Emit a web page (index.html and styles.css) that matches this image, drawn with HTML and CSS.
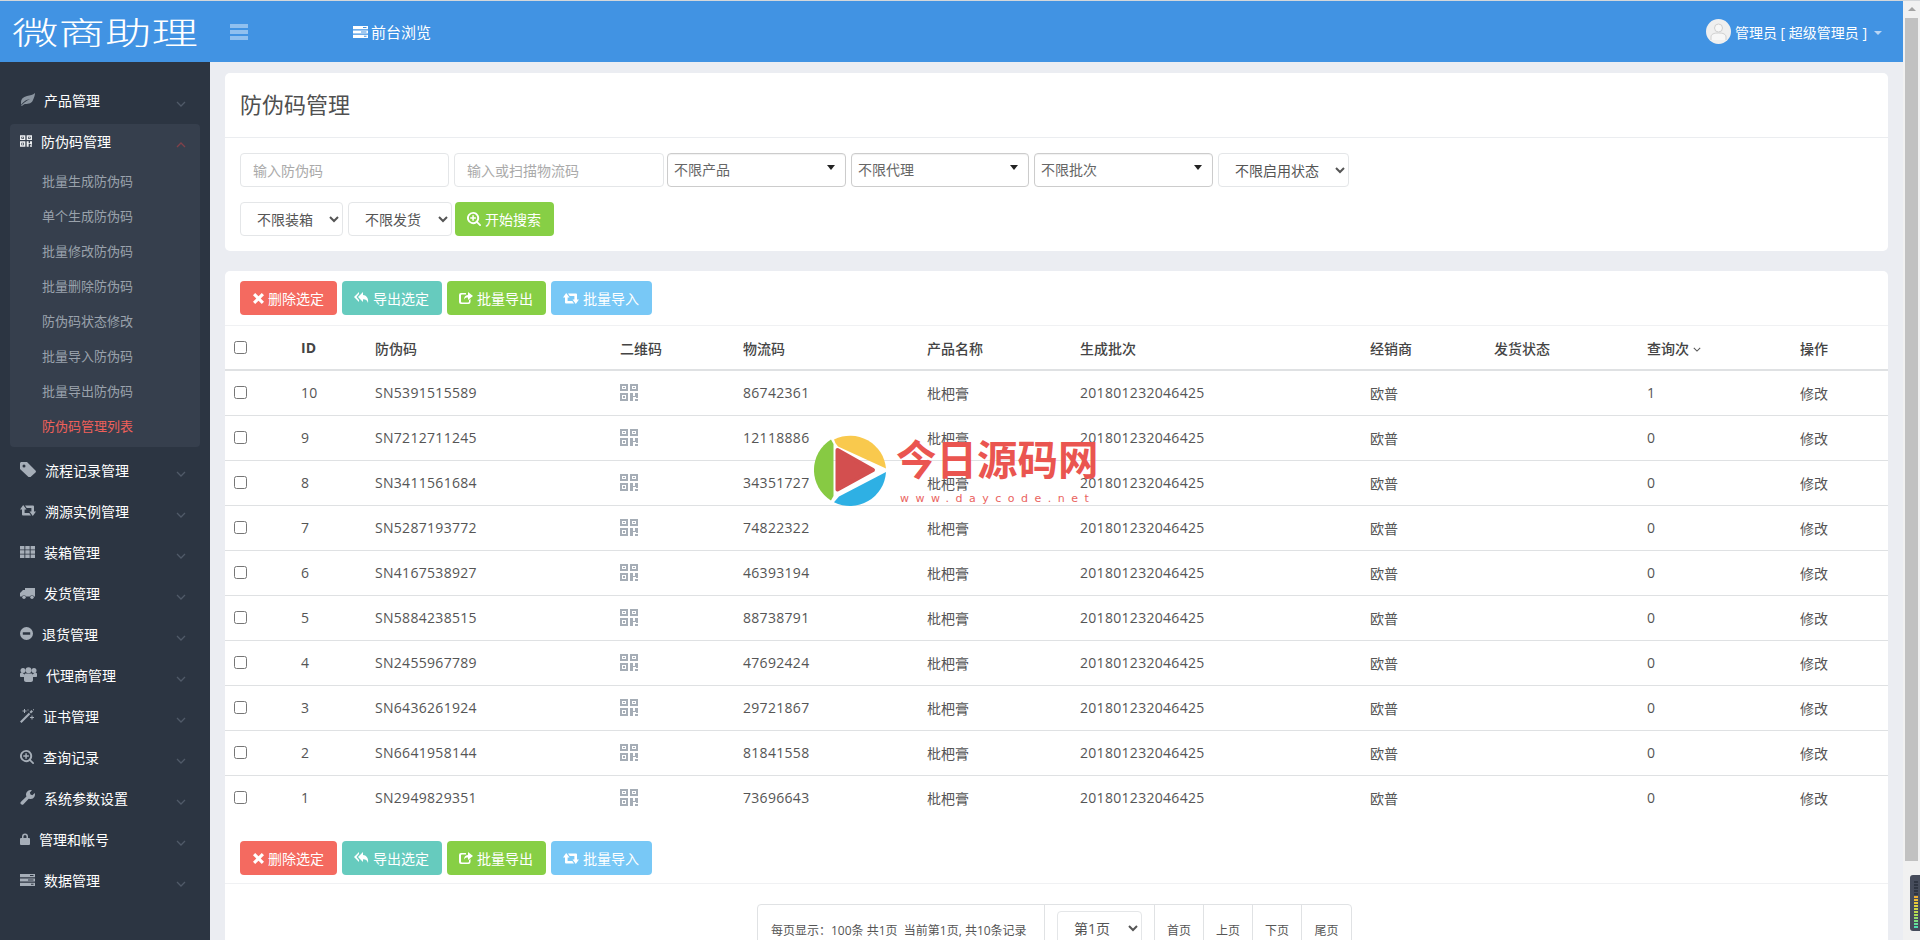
FILE: index.html
```html
<!DOCTYPE html>
<html lang="zh-CN">
<head>
<meta charset="utf-8">
<title>防伪码管理</title>
<link rel="stylesheet" href="styles.css">
</head>
<body>
<svg class="defs" width="0" height="0" aria-hidden="true">
  <symbol id="i-qr" viewBox="0 0 18 17"><path fill-rule="evenodd" d="M0 0h8v7H0zM2 2v3h4V2zM3 3h2v1H3zM10 0h8v7h-8zM12 2v3h4V2zM13 3h2v1h-2zM0 9h8v8H0zM2 11v4h4v-4zM3 12h2v2H3zM10 9h3v3h2V9h3v5h-2v-1h-3v4h-3zM15 15h3v2h-3z"/></symbol>
  <symbol id="i-x" viewBox="0 0 10 10"><path d="M2 0l3 3 3-3 2 2-3 3 3 3-2 2-3-3-3 3-2-2 3-3-3-3z"/></symbol>
  <symbol id="i-reply" viewBox="0 0 15 12"><path d="M5 0L0 5l5 5V8L2.500 5 5 2zM9 0L4 5l5 5V7.200c3 0 4 1 5 3.800 1-5-2-8-5-8z"/></symbol>
  <symbol id="i-share" viewBox="0 0 14 12"><path d="M2 1h5v1.500H3a1 1 0 00-1 1v6a1 1 0 001 1h6a1 1 0 001-1V8l1.500-1v3a2 2 0 01-2 2H2a2 2 0 01-2-2V3a2 2 0 012-2zM9 0l5 4-5 4V5.500C7 5.500 5.500 6 5 8c0-3 1-4.500 4-5z"/></symbol>
  <symbol id="i-retweet" viewBox="0 0 16 11"><path d="M3.200 0L6.500 4.500H4.600V8H9.300L11 10.500H3a1 1 0 01-1-1V4.500H0zM12.800 11L9.500 6.500h1.900V3H6.700L5 .5h8a1 1 0 011 1v5h2z"/></symbol>
  <symbol id="i-search" viewBox="0 0 15 15"><path fill-rule="evenodd" d="M6.500 0a6.500 6.500 0 015.200 10.400l3 3c.4.400.4 1 0 1.300-.4.400-1 .4-1.300 0l-3-3A6.500 6.500 0 116.500 0zm0 2a4.500 4.500 0 100 9 4.500 4.500 0 000-9zM5.700 3.500h1.600v2.200h2.200v1.600H7.300v2.200H5.700V7.300H3.500V5.700h2.200z"/></symbol>
  <symbol id="i-server" viewBox="0 0 15 12"><path fill-rule="evenodd" d="M0 0h15v3.300H0zM10 1v1h3.500V1zM0 4.400h15v3.200H0zM8 5.500v1h5.500v-1zM0 8.700h15V12H0zM11 9.800v1h2.500v-1z"/></symbol>
  <symbol id="i-down" viewBox="0 0 10 6"><path d="M1 1l4 4 4-4" fill="none" stroke="currentColor" stroke-width="1.300"/></symbol>
  <symbol id="i-up" viewBox="0 0 10 6"><path d="M1 5l4-4 4 4" fill="none" stroke="currentColor" stroke-width="1.300"/></symbol>
</svg>

<div class="app">
  <div class="main">
    <header class="topbar">
      <div class="logo"><span class="logo-text">微商助理</span></div>
      <div class="hamburger"><span></span><span></span><span></span></div>
      <a class="front-link"><svg class="front-icon" width="15" height="12"><use href="#i-server"/></svg>前台浏览</a>
      <div class="user">
        <svg class="avatar" width="25" height="25" viewBox="0 0 25 25"><circle cx="12.500" cy="12.500" r="12.500" fill="#efefef"/><circle cx="12.500" cy="9" r="4" fill="#f7f7f7" stroke="#cfcfcf"/><path d="M5 21v-3c0-3 3-4 7.500-4s7.500 1 7.500 4v3" fill="#f7f7f7" stroke="#cfcfcf"/></svg>
        <span>管理员 [ 超级管理员 ]</span>
        <i class="user-caret"></i>
      </div>
    </header>

    <div class="body-row">
      <nav class="sidebar">
        <a class="nav-item">
          <svg class="nav-icon dim" width="15" height="13" viewBox="0 0 15 13"><path d="M15 0C13 2 10 2 7 3 3 4 1 6 1 9c0 1 0 2 .5 3C2 10 5 7 10 6 6 8 3 10 1 13h1c1-1 2-2 3-2 4 0 7-1 8-4 1-2 2-5 2-7z"/></svg>
          <span>产品管理</span><svg class="chev" width="10" height="6"><use href="#i-down"/></svg>
        </a>
        <div class="nav-group">
          <a class="nav-item in-group">
            <svg class="nav-icon bright" width="12" height="12"><use href="#i-qr"/></svg>
            <span>防伪码管理</span><svg class="chev chev-open" width="10" height="6"><use href="#i-up"/></svg>
          </a>
          <ul class="sub-list">
            <li>批量生成防伪码</li>
            <li>单个生成防伪码</li>
            <li>批量修改防伪码</li>
            <li>批量删除防伪码</li>
            <li>防伪码状态修改</li>
            <li>批量导入防伪码</li>
            <li>批量导出防伪码</li>
            <li class="current">防伪码管理列表</li>
          </ul>
        </div>
        <a class="nav-item">
          <svg class="nav-icon" width="16" height="15" viewBox="0 0 16 15"><path fill-rule="evenodd" d="M0 1.500C0 .7.7 0 1.500 0H7l8.500 8.500c.6.600.6 1.400 0 2L10.500 15c-.6.600-1.400.6-2 0L0 7zM4 2.500a1.500 1.500 0 100 3 1.500 1.500 0 000-3z"/></svg>
          <span>流程记录管理</span><svg class="chev" width="10" height="6"><use href="#i-down"/></svg>
        </a>
        <a class="nav-item">
          <svg class="nav-icon" width="16" height="11"><use href="#i-retweet"/></svg>
          <span>溯源实例管理</span><svg class="chev" width="10" height="6"><use href="#i-down"/></svg>
        </a>
        <a class="nav-item">
          <svg class="nav-icon" width="15" height="12" viewBox="0 0 15 12"><path d="M0 0h4.400v3.400H0zM5.300 0h4.400v3.400H5.300zM10.600 0H15v3.400h-4.400zM0 4.300h4.400v3.400H0zM5.300 4.300h4.400v3.400H5.300zM10.600 4.300H15v3.400h-4.400zM0 8.600h4.400V12H0zM5.300 8.600h4.400V12H5.300zM10.600 8.600H15V12h-4.400z"/></svg>
          <span>装箱管理</span><svg class="chev" width="10" height="6"><use href="#i-down"/></svg>
        </a>
        <a class="nav-item">
          <svg class="nav-icon" width="15" height="12" viewBox="0 0 15 12"><path d="M5 1h10v8.500h-1a2.300 2.300 0 00-4 0H6a2.300 2.300 0 00-4 0H0V6l3-3h2z"/><circle cx="4" cy="10.200" r="1.700"/><circle cx="12" cy="10.200" r="1.700"/></svg>
          <span>发货管理</span><svg class="chev" width="10" height="6"><use href="#i-down"/></svg>
        </a>
        <a class="nav-item">
          <svg class="nav-icon" width="13" height="13" viewBox="0 0 13 13"><path fill-rule="evenodd" d="M6.500 0a6.500 6.500 0 110 13 6.500 6.500 0 010-13zM2.800 5.300v2.400h7.400V5.300z"/></svg>
          <span>退货管理</span><svg class="chev" width="10" height="6"><use href="#i-down"/></svg>
        </a>
        <a class="nav-item">
          <svg class="nav-icon" width="17" height="15" viewBox="0 0 17 15"><circle cx="3" cy="3.500" r="2.500"/><circle cx="14" cy="3.500" r="2.500"/><circle cx="8.500" cy="3.200" r="3"/><path d="M0 7c0-1 1-1.500 2-1.500L4 7v3H1c-.6 0-1-.4-1-1zM17 7c0-1-1-1.500-2-1.500L13 7v3h3c.6 0 1-.4 1-1zM4 8.500C4 7 5 6.500 6 6.500h5c1 0 2 .5 2 2V13c0 1-1 2-2 2H6c-1 0-2-1-2-2z"/></svg>
          <span>代理商管理</span><svg class="chev" width="10" height="6"><use href="#i-down"/></svg>
        </a>
        <a class="nav-item">
          <svg class="nav-icon" width="14" height="14" viewBox="0 0 14 14"><path d="M1.500 14L0 12.500 8.800 3.700l1.500 1.500zM9.500 3L11.500 1 13 2.500 11 4.500z"/><path d="M4 0h1v1.500h1.500v1H5V4H4V2.500H2.500v-1H4zM11.500 6.500h1V8H14v1h-1.500v1.500h-1V9H10V8h1.500zM7.500 .5h1v1h-1zM13 .2h1v1h-1z"/></svg>
          <span>证书管理</span><svg class="chev" width="10" height="6"><use href="#i-down"/></svg>
        </a>
        <a class="nav-item">
          <svg class="nav-icon" width="14" height="14"><use href="#i-search"/></svg>
          <span>查询记录</span><svg class="chev" width="10" height="6"><use href="#i-down"/></svg>
        </a>
        <a class="nav-item">
          <svg class="nav-icon" width="15" height="15" viewBox="0 0 15 15"><path d="M14.700 3A4.500 4.500 0 1112 .3L9.800 2.600l.7 1.900 1.900.7zM6.700 6.200l2.200 2.200-5.400 5.800c-.7.700-1.700.8-2.500.1-.8-.8-.7-1.900 0-2.600z"/></svg>
          <span>系统参数设置</span><svg class="chev" width="10" height="6"><use href="#i-down"/></svg>
        </a>
        <a class="nav-item">
          <svg class="nav-icon" width="10" height="12" viewBox="0 0 10 12"><path fill-rule="evenodd" d="M2 5V3.500a3 3 0 016 0V5h1a1 1 0 011 1v5a1 1 0 01-1 1H1a1 1 0 01-1-1V6a1 1 0 011-1zM3.500 5h3V3.500a1.500 1.500 0 00-3 0z"/></svg>
          <span>管理和帐号</span><svg class="chev" width="10" height="6"><use href="#i-down"/></svg>
        </a>
        <a class="nav-item">
          <svg class="nav-icon" width="15" height="12"><use href="#i-server"/></svg>
          <span>数据管理</span><svg class="chev" width="10" height="6"><use href="#i-down"/></svg>
        </a>
      </nav>

      <main class="content">
        <section class="card card-search">
          <h1 class="card-title">防伪码管理</h1>
          <form class="filters">
            <div class="filter-row">
              <input class="field w-209 mr-5" placeholder="输入防伪码">
              <input class="field w-210 mr-3" placeholder="输入或扫描物流码">
              <div class="chosen w-179 mr-5">不限产品<i class="chosen-caret"></i></div>
              <div class="chosen w-178 mr-5">不限代理<i class="chosen-caret"></i></div>
              <div class="chosen w-179 mr-5">不限批次<i class="chosen-caret"></i></div>
              <select class="pick w-131"><option>不限启用状态</option></select>
            </div>
            <div class="filter-row">
              <select class="pick w-103 mr-5"><option>不限装箱</option></select>
              <select class="pick w-104 mr-3"><option>不限发货</option></select>
              <button class="btn btn-green btn-search" type="button"><svg width="14" height="14"><use href="#i-search"/></svg>开始搜索</button>
            </div>
          </form>
        </section>

        <section class="card card-list">
          <div class="actions">
            <button class="btn btn-red" type="button"><svg width="11" height="11"><use href="#i-x"/></svg>删除选定</button>
            <button class="btn btn-teal" type="button"><svg width="15" height="12"><use href="#i-reply"/></svg>导出选定</button>
            <button class="btn btn-green" type="button"><svg width="14" height="12"><use href="#i-share"/></svg>批量导出</button>
            <button class="btn btn-blue" type="button"><svg width="16" height="11"><use href="#i-retweet"/></svg>批量导入</button>
          </div>
          <table class="grid">
            <colgroup>
              <col class="c1"><col class="c2"><col class="c3"><col class="c4"><col class="c5"><col class="c6"><col class="c7"><col class="c8"><col class="c9"><col class="c10"><col class="c11">
            </colgroup>
            <thead>
              <tr><th><input type="checkbox"></th><th class="th-id">ID</th><th>防伪码</th><th>二维码</th><th>物流码</th><th>产品名称</th><th>生成批次</th><th>经销商</th><th>发货状态</th><th>查询次 <svg class="th-chev" width="8" height="5"><use href="#i-down"/></svg></th><th>操作</th></tr>
            </thead>
            <tbody>
              <tr><td><input type="checkbox"></td><td class="n">10</td><td class="n">SN5391515589</td><td><svg class="qr" width="18" height="17"><use href="#i-qr"/></svg></td><td class="n">86742361</td><td>枇杷膏</td><td class="n">201801232046425</td><td>欧普</td><td></td><td class="n">1</td><td>修改</td></tr>
              <tr><td><input type="checkbox"></td><td class="n">9</td><td class="n">SN7212711245</td><td><svg class="qr" width="18" height="17"><use href="#i-qr"/></svg></td><td class="n">12118886</td><td>枇杷膏</td><td class="n">201801232046425</td><td>欧普</td><td></td><td class="n">0</td><td>修改</td></tr>
              <tr><td><input type="checkbox"></td><td class="n">8</td><td class="n">SN3411561684</td><td><svg class="qr" width="18" height="17"><use href="#i-qr"/></svg></td><td class="n">34351727</td><td>枇杷膏</td><td class="n">201801232046425</td><td>欧普</td><td></td><td class="n">0</td><td>修改</td></tr>
              <tr><td><input type="checkbox"></td><td class="n">7</td><td class="n">SN5287193772</td><td><svg class="qr" width="18" height="17"><use href="#i-qr"/></svg></td><td class="n">74822322</td><td>枇杷膏</td><td class="n">201801232046425</td><td>欧普</td><td></td><td class="n">0</td><td>修改</td></tr>
              <tr><td><input type="checkbox"></td><td class="n">6</td><td class="n">SN4167538927</td><td><svg class="qr" width="18" height="17"><use href="#i-qr"/></svg></td><td class="n">46393194</td><td>枇杷膏</td><td class="n">201801232046425</td><td>欧普</td><td></td><td class="n">0</td><td>修改</td></tr>
              <tr><td><input type="checkbox"></td><td class="n">5</td><td class="n">SN5884238515</td><td><svg class="qr" width="18" height="17"><use href="#i-qr"/></svg></td><td class="n">88738791</td><td>枇杷膏</td><td class="n">201801232046425</td><td>欧普</td><td></td><td class="n">0</td><td>修改</td></tr>
              <tr><td><input type="checkbox"></td><td class="n">4</td><td class="n">SN2455967789</td><td><svg class="qr" width="18" height="17"><use href="#i-qr"/></svg></td><td class="n">47692424</td><td>枇杷膏</td><td class="n">201801232046425</td><td>欧普</td><td></td><td class="n">0</td><td>修改</td></tr>
              <tr><td><input type="checkbox"></td><td class="n">3</td><td class="n">SN6436261924</td><td><svg class="qr" width="18" height="17"><use href="#i-qr"/></svg></td><td class="n">29721867</td><td>枇杷膏</td><td class="n">201801232046425</td><td>欧普</td><td></td><td class="n">0</td><td>修改</td></tr>
              <tr><td><input type="checkbox"></td><td class="n">2</td><td class="n">SN6641958144</td><td><svg class="qr" width="18" height="17"><use href="#i-qr"/></svg></td><td class="n">81841558</td><td>枇杷膏</td><td class="n">201801232046425</td><td>欧普</td><td></td><td class="n">0</td><td>修改</td></tr>
              <tr><td><input type="checkbox"></td><td class="n">1</td><td class="n">SN2949829351</td><td><svg class="qr" width="18" height="17"><use href="#i-qr"/></svg></td><td class="n">73696643</td><td>枇杷膏</td><td class="n">201801232046425</td><td>欧普</td><td></td><td class="n">0</td><td>修改</td></tr>
            </tbody>
          </table>
          <div class="actions actions-bottom">
            <button class="btn btn-red" type="button"><svg width="11" height="11"><use href="#i-x"/></svg>删除选定</button>
            <button class="btn btn-teal" type="button"><svg width="15" height="12"><use href="#i-reply"/></svg>导出选定</button>
            <button class="btn btn-green" type="button"><svg width="14" height="12"><use href="#i-share"/></svg>批量导出</button>
            <button class="btn btn-blue" type="button"><svg width="16" height="11"><use href="#i-retweet"/></svg>批量导入</button>
          </div>
          <div class="pager-wrap">
            <div class="pager">
              <span class="pager-info">每页显示：100条 共1页&nbsp; 当前第1页, 共10条记录</span>
              <span class="pager-select"><select class="pick w-85"><option>第1页</option></select></span>
              <a class="pager-link">首页</a><a class="pager-link">上页</a><a class="pager-link">下页</a><a class="pager-link">尾页</a>
            </div>
          </div>
        </section>
      </main>
    </div>
  </div>

  <div class="scrollbar">
    <i class="scroll-up"></i>
    <div class="scroll-thumb"></div>
  </div>
</div>

<div class="meter"><i class="meter-bars"></i></div>

<div class="watermark">
  <svg class="wm-logo" width="72" height="72" viewBox="0 0 72 72">
    <path fill="#f9c94d" d="M20 5.500A36 36 0 0 1 72 34.500L24 12.500Q21 9.500 20 5.500z"/>
    <path fill="#87ca43" d="M17 5.400A36 36 0 0 0 17 66.600L19.500 62V10z"/>
    <path fill="#2eb0e4" d="M72 38A36 36 0 0 1 20 68.200L25 62.500z"/>
    <path fill="#d34f4f" stroke="#d34f4f" stroke-width="4" stroke-linejoin="round" d="M23.500 16L59 36 23.500 55.500z"/>
  </svg>
  <div class="wm-text">
    <div class="wm-title">今日源码网</div>
    <div class="wm-url">www.daycode.net</div>
  </div>
</div>
</body>
</html>
```
FILE: styles.css
```css
* { box-sizing: border-box; }
html, body { margin: 0; padding: 0; height: 940px; overflow: hidden; }
body {
  position: relative;
  font-family: "Open Sans", "Noto Sans CJK SC", sans-serif;
  font-size: 14px;
  color: #555;
  background: #ebedf2;
  border-top: 1px solid #d4d7da;
}
.defs { position: absolute; }
a { color: inherit; text-decoration: none; }

.app { display: flex; height: 939px; }
.main { width: 1903px; display: flex; flex-direction: column; }

/* top bar */
.topbar {
  height: 61px;
  flex: none;
  display: flex;
  align-items: center;
  background: #4193e3;
  color: #fff;
  padding-right: 21px;
}
.logo { width: 230px; padding-left: 12px; flex: none; }
.logo-text {
  display: inline-block;
  font-size: 31px;
  line-height: 40px;
  font-weight: 300;
  white-space: nowrap;
  transform: scaleX(1.5);
  transform-origin: left center;
  letter-spacing: 0;
}
.hamburger { width: 18px; display: flex; flex-direction: column; gap: 2px; flex: none; }
.hamburger span { height: 4px; background: rgba(255,255,255,.42); }
.front-link { display: flex; align-items: center; gap: 3px; margin-left: 105px; font-size: 15px; }
.front-icon { fill: #fff; }
.user { margin-left: auto; display: flex; align-items: center; font-size: 14px; }
.avatar { margin-right: 4px; }
.user-caret {
  margin: 2px 0 0 7px;
  border-top: 4px solid #b9d6f5;
  border-left: 4px solid transparent;
  border-right: 4px solid transparent;
}

.body-row { flex: 1; display: flex; min-height: 0; }

/* sidebar */
.sidebar {
  width: 210px;
  flex: none;
  background: #2c3542;
  padding-top: 17px;
  color: #fff;
}
.nav-item {
  height: 41px;
  display: flex;
  align-items: center;
  gap: 9px;
  padding: 0 24px 0 20px;
  font-size: 14px;
}
.nav-icon { fill: #a6aeb8; flex: none; }
.nav-icon.dim { fill: #8b95a0; }
.nav-icon.bright { fill: #eef0f2; }
.chev { margin: 8px 0 0 auto; color: #505a68; flex: none; }
.chev-open { color: #80414a; }
.nav-group {
  margin: 4px 10px 2px;
  padding-bottom: 3px;
  background: #363f4d;
  border-radius: 4px;
}
.nav-item.in-group { height: 34px; padding: 0 14px 0 10px; }
.sub-list { list-style: none; margin: 6px 0 0; padding: 0 0 0 32px; color: #9aa2ac; font-size: 13px; }
.sub-list li { height: 35px; line-height: 35px; }
.sub-list .current { color: #f0605a; }

/* content */
.content { flex: 1; min-width: 0; padding: 11px 15px 0; display: flex; flex-direction: column; gap: 20px; overflow: hidden; }
.card { background: #fff; border-radius: 5px; flex: none; }
.card-title {
  margin: 0;
  height: 65px;
  line-height: 62px;
  padding-left: 15px;
  font-size: 22px;
  font-weight: 400;
  color: #505050;
  border-bottom: 1px solid #ebedf0;
}
.filters { padding: 15px 15px 15px; display: flex; flex-direction: column; gap: 15px; }
.filter-row { display: flex; height: 34px; }
.field {
  height: 34px;
  padding: 0 12px;
  border: 1px solid #e4e6e8;
  border-radius: 4px;
  font: inherit;
  color: #555;
  outline: 0;
}
.field::placeholder { color: #aaa; }
.chosen {
  position: relative;
  height: 34px;
  line-height: 32px;
  padding-left: 6px;
  border: 1px solid #ccc;
  border-radius: 4px;
  color: #666;
  box-shadow: inset 0 1px 1px rgba(0,0,0,.06);
}
.chosen-caret {
  position: absolute;
  right: 10px;
  top: 11px;
  border-top: 5px solid #222;
  border-left: 4.500px solid transparent;
  border-right: 4.500px solid transparent;
}
.pick {
  height: 34px;
  padding: 0 5px 0 12px;
  border: 1px solid #e4e6e8;
  border-radius: 4px;
  background-color: #fff;
  font: inherit;
  color: #555;
  outline: 0;
}
.w-209 { width: 209px; } .w-210 { width: 210px; }
.w-179 { width: 179px; } .w-178 { width: 178px; }
.w-131 { width: 131px; } .w-103 { width: 103px; } .w-104 { width: 104px; } .w-85 { width: 85px; }
.mr-5 { margin-right: 5px; } .mr-3 { margin-right: 3px; }

.btn {
  height: 34px;
  padding: 0 13px 0 12px;
  display: inline-flex;
  align-items: center;
  gap: 4px;
  border: 0;
  border-radius: 4px;
  font: inherit;
  color: #fff;
  fill: #fff;
}
.btn-red { background: #f46a60; padding-left: 13px; }
.btn-teal { background: #66cbbe; }
.btn-green { background: #87cf45; }
.btn-blue { background: #78c8f6; }

.actions { height: 55px; padding: 10px 15px; display: flex; gap: 5px; border-bottom: 1px solid #f0f1f3; }
.actions-bottom { height: 64px; padding: 21px 15px 9px; }

/* table */
.grid { width: 1663px; table-layout: fixed; border-collapse: collapse; }
.c1 { width: 67px; } .c2 { width: 74px; } .c3 { width: 245px; } .c4 { width: 123px; }
.c5 { width: 184px; } .c6 { width: 153px; } .c7 { width: 290px; } .c8 { width: 124px; }
.c9 { width: 153px; } .c10 { width: 153px; } .c11 { width: 97px; }
.grid th, .grid td { padding: 0 0 0 9px; text-align: left; }
.grid th { height: 44px; font-weight: 500; color: #444; border-bottom: 2px solid #dfe1e3; }
.grid .th-id { font-weight: 700; }
.grid td { height: 45px; border-bottom: 1px solid #dfe1e3; }
.grid td.n { letter-spacing: .3px; }
.grid tbody tr:last-child td { border-bottom: 0; }
.grid input[type=checkbox] { margin: 0; display: block; width: 13px; height: 13px; }
.th-chev { color: #555; vertical-align: 2px; }
.qr { display: block; fill: #a5adb6; }

/* pagination */
.pager-wrap { padding: 20px 4px 0 0; display: flex; justify-content: center; }
.pager {
  display: flex;
  height: 60px;
  border: 1px solid #e0e2e4;
  border-radius: 4px;
  font-size: 12px;
}
.pager-info { width: 287px; padding: 16px 0 0 13px; border-right: 1px solid #e0e2e4; white-space: nowrap; }
.pager-select { width: 110px; padding: 6px 12px; border-right: 1px solid #e0e2e4; font-size: 14px; }
.pager-link { width: 49px; padding-top: 16px; text-align: center; border-right: 1px solid #e0e2e4; }
.pager-link:last-child { border-right: 0; }

/* fake window scrollbar */
.scrollbar { width: 17px; flex: none; background: #f1f1f1; padding-top: 6px; display: flex; flex-direction: column; align-items: center; }
.scroll-up { border-bottom: 4px solid #a3a3a3; border-left: 4px solid transparent; border-right: 4px solid transparent; }
.scroll-thumb { width: 13px; height: 843px; margin-top: 7px; background: #c1c1c1; }

/* overlays */
.meter {
  position: absolute;
  left: 1910px;
  top: 874px;
  width: 10px;
  height: 56px;
  background: #464c5b;
  border-radius: 3px 0 0 3px;
  padding: 6px 2px 2px 4px;
}
.meter-bars {
  display: block;
  height: 100%;
  background:
    repeating-linear-gradient(transparent 0 2px, #464c5b 2px 3px),
    linear-gradient(#2f3542 0 30%, #f0a830 30%, #e8d23c 50%, #a8e058 72%, #40e0c0 100%);
}
.watermark {
  position: absolute;
  left: 814px;
  top: 433px;
  display: flex;
  pointer-events: none;
}
.wm-logo { display: block; }
.wm-text { margin-left: 10px; }
.wm-title {
  font-size: 40.500px;
  line-height: 46px;
  margin-top: 3px;
  font-weight: 700;
  color: #ea5550;
  white-space: nowrap;
}
.wm-url {
  font-family: "DejaVu Sans", sans-serif;
  font-size: 11px;
  line-height: 14px;
  margin-top: 9px;
  padding-left: 4px;
  letter-spacing: 6.500px;
  color: #ea6360;
  white-space: nowrap;
}
```
